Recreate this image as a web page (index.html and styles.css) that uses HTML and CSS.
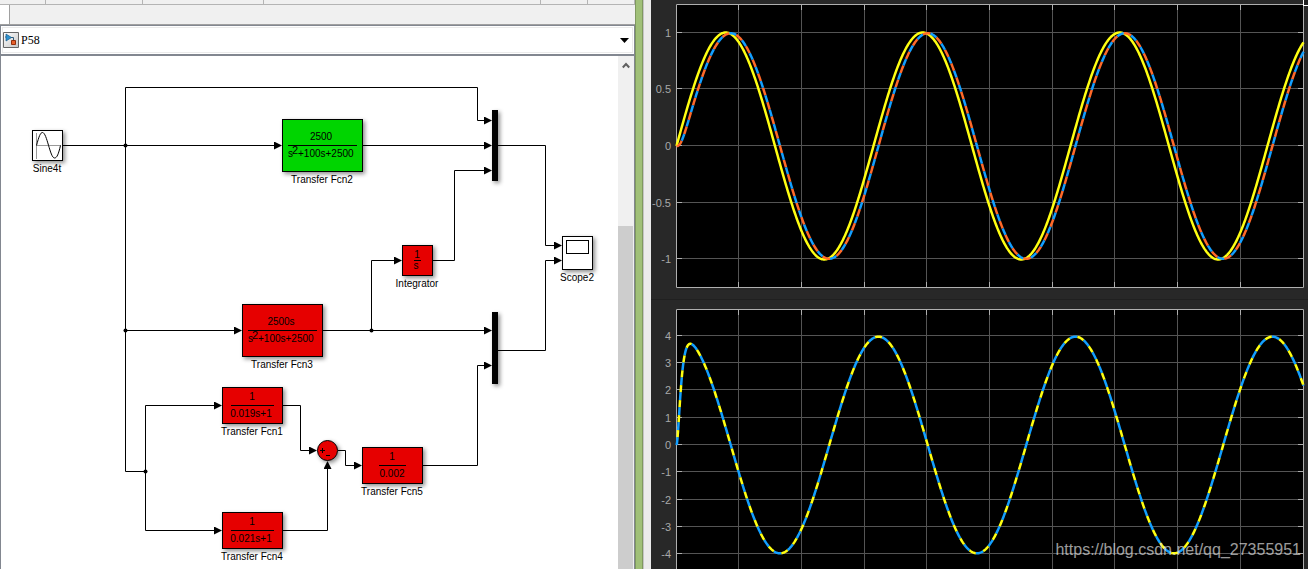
FILE: index.html
```
<!DOCTYPE html>
<html lang="en">
<head>
<meta charset="utf-8">
<title>P58</title>
<link rel="stylesheet" href="styles.css">
</head>
<body>
<main class="workspace">
  <section class="editor" aria-label="Model editor">
    <div class="toolbar"><span class="cell"></span><span class="cell"></span><span class="cell"></span><span class="cell"></span><span class="cell"></span><span class="cell"></span></div>
    <div class="tabs"><span class="tab"></span></div>
    <div class="path-bar">
      <div class="path-box">
        <svg class="model-icon" width="16" height="16" viewBox="0 0 16 16" aria-hidden="true">
          <defs><linearGradient id="tile" x1="0" y1="0" x2="1" y2="1"><stop offset="0" stop-color="#fff"/><stop offset="1" stop-color="#c6c6c6"/></linearGradient></defs>
          <path d="M.5 .5h15v15H.5z" fill="url(#tile)" stroke="#666"/>
          <path d="M2 5h2M8 5.500h2.500v3" fill="none" stroke="#335a78"/>
          <path d="M3 2l5.500 3.500-5.500 3.500z" fill="#2e93d0" stroke="#175d8c" stroke-width=".7"/>
          <path d="M8.500 8.500h4v4h-4z" fill="#e8602c" stroke="#922f0c"/>
        </svg>
        <select class="path-select" aria-label="Model path"><option>P58</option></select>
        <svg class="caret" width="9" height="5" viewBox="0 0 9 5" aria-hidden="true"><path d="M0 0h9L4.500 5z"/></svg>
      </div>
    </div>
    <div class="canvas-row">
      <div class="canvas">
        <svg class="diagram" width="617" height="513" viewBox="1 56 617 513" role="img" aria-label="Block diagram">
          <defs><marker id="arrow" viewBox="0 0 8 8" markerWidth="8" markerHeight="8" refX="7" refY="4" orient="auto" markerUnits="userSpaceOnUse"><path d="M0 0L8 4L0 8z"/></marker></defs>
          <g class="wires">
            <path class="to" d="M63 145.500H281"/>
            <path class="to" d="M125.500 145.500V87.500H477.500V120.500H491"/>
            <path class="to" d="M363 145.500H491"/>
            <path class="to" d="M433 260.500H454.500V170.500H491"/>
            <path class="to" d="M498 145.500H545.500V245.500H561"/>
            <path class="to" d="M498 350.500H545.500V260.500H561"/>
            <path class="to" d="M125.500 330.500H241"/>
            <path class="to" d="M323 330.500H491"/>
            <path class="to" d="M371.500 330.500V260.500H401"/>
            <path d="M125.500 145.500V471.500H145.500"/>
            <path class="to" d="M145.500 471.500V405.500H221"/>
            <path class="to" d="M145.500 471.500V530.500H221"/>
            <path class="to" d="M283 405.500H300.500V450.500H316"/>
            <path class="to" d="M283 530.500H327.500V462"/>
            <path class="to" d="M338 450.500H345.500V465.500H361"/>
            <path class="to" d="M423 465.500H477.500V365.500H491"/>
          </g>
          <g class="joints"><circle cx="125.500" cy="145.500" r="2"/><circle cx="125.500" cy="330.500" r="2"/><circle cx="145.500" cy="471.500" r="2"/><circle cx="371.500" cy="330.500" r="2"/></g>

          <g class="block"><rect class="plain" x="32.500" y="130.500" width="30" height="30"/></g>
          <path d="M36.500 133V159M36 145.500H61" stroke="#999" fill="none"/>
          <path d="M36.500 145.500C39 136 40.500 132.500 42.500 132.500C47 132.500 50 158 54.500 158C57 158 58.500 154 60.500 145.500" stroke="#000" fill="none"/>
          <text x="47" y="172">Sine4t</text>

          <g class="block"><rect class="green" x="282.500" y="119.500" width="80" height="52"/></g>
          <path class="bar" d="M288 145.500H357"/>
          <text x="321" y="140">2500</text>
          <text class="left" x="288" y="157">s</text><text class="left sup" x="292" y="154">2</text><text class="left" x="298" y="157">+100s+2500</text>
          <text x="322" y="183">Transfer Fcn2</text>

          <g class="block"><rect class="red" x="242.500" y="304.500" width="80" height="52"/></g>
          <path class="bar" d="M248 330.500H317"/>
          <text x="281" y="325">2500s</text>
          <text class="left" x="248" y="342">s</text><text class="left sup" x="252" y="339">2</text><text class="left" x="258" y="342">+100s+2500</text>
          <text x="282" y="368">Transfer Fcn3</text>

          <g class="block"><rect class="red" x="222.500" y="387.500" width="60" height="36"/></g>
          <path class="bar" d="M231 405.500H274"/>
          <text x="252" y="400">1</text><text x="251" y="417">0.019s+1</text>
          <text x="252" y="435">Transfer Fcn1</text>

          <g class="block"><rect class="red" x="222.500" y="512.500" width="60" height="36"/></g>
          <path class="bar" d="M231 530.500H274"/>
          <text x="252" y="525">1</text><text x="251" y="542">0.021s+1</text>
          <text x="252" y="560">Transfer Fcn4</text>

          <g class="block"><rect class="red" x="362.500" y="447.500" width="60" height="36"/></g>
          <path class="bar" d="M379 465.500H406"/>
          <text x="392" y="460">1</text><text x="392" y="477">0.002</text>
          <text x="392" y="495">Transfer Fcn5</text>

          <g class="block"><circle class="red" cx="327.500" cy="450.500" r="10"/></g>
          <path class="bar" d="M320 450.500H325M322.500 448V453M326 455.500H330"/>

          <g class="block"><rect class="red" x="402.500" y="245.500" width="30" height="30"/></g>
          <path class="bar" d="M414 260.500H421"/>
          <text x="417" y="258">1</text><text x="416" y="269">s</text>
          <text x="417" y="287">Integrator</text>

          <g class="block"><rect class="mux" x="492" y="110" width="6" height="71"/><rect class="mux" x="492" y="312" width="6" height="72"/></g>

          <g class="block"><rect class="plain" x="562.500" y="236.500" width="30" height="33"/></g>
          <rect class="screen" x="566.500" y="240.500" width="22" height="13"/>
          <text x="577" y="281">Scope2</text>
        </svg>
      </div>
      <div class="scrollbar">
        <button class="scroll-up" aria-label="Scroll up"><svg width="8" height="7" viewBox="0 0 8 7"><path d="M.8 5.500L4 2L7.200 5.500" fill="none" stroke="#606060" stroke-width="2"/></svg></button>
        <div class="thumb"></div>
      </div>
    </div>
  </section>
  <div class="frame-gap"></div>
  <section class="scope" aria-label="Scope">
    <figure class="panel"><svg class="plot" id="plot-position" role="img" aria-label="Tracked signals"></svg></figure>
    <figure class="panel panel-second"><svg class="plot" id="plot-rate" role="img" aria-label="Derivative signals"></svg></figure>
    <span class="corner"></span>
    <span class="watermark">https://blog.csdn.net/qq_27355951</span>
  </section>
</main>
<script src="plots.js"></script>
</body>
</html>
```
FILE: styles.css
```
* { box-sizing: border-box; }
body {
  margin: 0;
  overflow: hidden;
  background: #f0f0f0;
  font-family: "Liberation Sans", Arial, sans-serif;
}
.workspace {
  display: grid;
  grid-template-columns: minmax(0, 635fr) 16px minmax(0, 657fr);
  height: 100vh;
}
.editor {
  display: flex;
  flex-direction: column;
  min-height: 0;
}
.toolbar {
  display: grid;
  grid-template-columns: 46fr 97fr 121fr 277fr 47fr 47fr;
  height: 5px;
  border-bottom: 1px solid #b4b4b4;
}
.cell { border-right: 1px solid #b4b4b4; }
.tabs {
  display: flex;
  height: 20px;
  border-bottom: 1px solid #a0a0a0;
}
.tab {
  width: 10px;
  background: #fff;
  border-right: 1px solid #a0a0a0;
}
.path-bar {
  height: 31px;
  padding: 1px;
  background: #fff;
  border: 1px solid #828790;
  border-bottom-width: 2px;
}
.path-box {
  display: flex;
  align-items: center;
  height: 100%;
  padding: 0 3px 0 0;
  border: 1px solid #ebebeb;
}
.path-select {
  flex: 1;
  margin: 0;
  padding: 0 2px;
  border: 0;
  background: transparent;
  color: #000;
  appearance: none;
  font: 12px/16px "Liberation Serif", serif;
}
.canvas-row {
  display: flex;
  flex: 1;
  min-height: 0;
  border: 1px solid #828790;
  border-width: 0 1px;
  background: #fff;
}
.canvas {
  flex: 1;
  min-width: 0;
  overflow: hidden;
}
.diagram { display: block; }
.diagram text {
  font-size: 10px;
  text-anchor: middle;
}
.diagram .left { text-anchor: start; }
.diagram .sup { font-size: 11px; }
.wires path { fill: none; stroke: #000; }
.wires .to { marker-end: url(#arrow); }
.block {
  stroke: #000;
  filter: drop-shadow(2px 2px 2px rgba(0, 0, 0, 0.45));
}
.green { fill: #00d500; }
.red { fill: #e60000; }
.plain { fill: #fff; }
.mux { fill: #000; stroke: none; }
.screen { fill: #fff; stroke: #000; }
.bar { fill: none; stroke: #000; }
.scrollbar {
  display: flex;
  flex-direction: column;
  width: 16px;
  padding-right: 1px;
  background: #f0f0f0;
}
.scroll-up {
  height: 17px;
  margin-bottom: 153px;
  padding: 0;
  border: 0;
  background: transparent;
  line-height: 10px;
}
.thumb { flex: 1; background: #cdcdcd; }
.frame-gap {
  background: linear-gradient(to right, #7f985f 1px, #a0c078 1px 7px, #7f985f 7px 8px, #c4c4c4 8px 9px, #ebebeb 9px);
}
.scope {
  position: relative;
  overflow: hidden;
  background: #282828;
}
.panel {
  height: 300px;
  margin: 0;
  padding: 4px 4px 11px 25px;
  border-bottom: 1px solid #202020;
}
.panel-second { padding: 9px 4px 18px 25px; }
.plot {
  display: block;
  width: 100%;
  height: 100%;
  overflow: visible;
}
.plot text {
  font-size: 11px;
  text-anchor: end;
  fill: #a8a8a8;
}
.plot-area { fill: #000; }
.grid { fill: none; stroke: #545454; }
.ticks { fill: none; stroke: #afafaf; }
.curve { fill: none; stroke-width: 2.5px; }
.yellow { stroke: #ffff11; }
.blue { stroke: #139fff; }
.orange { stroke: #ff6929; }
.dash-first { stroke-dasharray: 8 7; }
.dash-second { stroke-dasharray: 7 8; stroke-dashoffset: -8px; }
.corner {
  position: absolute;
  top: -2px;
  right: -3px;
  width: 8px;
  height: 8px;
  border: 1px solid #fff;
  background: #202020;
}
.watermark {
  position: absolute;
  right: 7px;
  bottom: 9px;
  color: rgba(225, 225, 225, 0.7);
  font-size: 16px;
  line-height: 20px;
}
```
FILE: plots.js
```
const DURATION = 5;
const FREQ = 4;
const POLE = 50;
const GAIN = POLE * POLE / (POLE * POLE + FREQ * FREQ);
const LAG = 2 * Math.atan(FREQ / POLE);
const A = GAIN * Math.sin(LAG);
const B = POLE * A - FREQ * GAIN * Math.cos(LAG);

const source = t => Math.sin(FREQ * t);
const tracked = t => GAIN * Math.sin(FREQ * t - LAG) + (A + B * t) * Math.exp(-POLE * t);
const rate = t => FREQ * GAIN * Math.cos(FREQ * t - LAG) + (B - POLE * A - POLE * B * t) * Math.exp(-POLE * t);

function draw(id, limit, labels, curves) {
  const svg = document.getElementById(id);
  const box = svg.getBoundingClientRect();
  const w = Math.floor(box.width) - 1;
  const h = Math.floor(box.height) - 1;
  const px = v => Math.floor(v) + 0.5;
  const yOf = v => h / 2 - v / limit * h / 2;
  let grid = "";
  let ticks = `M.5 .5H${w + 0.5}V${h + 0.5}H.5Z`;
  for (let i = 1; i < 10; i++) {
    const x = px(i * w / 10);
    grid += `M${x} 0V${h}`;
    ticks += `M${x} 0v6M${x} ${h}v-5`;
  }
  let text = "";
  for (const v of labels) {
    const y = px(yOf(v));
    grid += `M0 ${y}H${w}`;
    ticks += `M0 ${y}h6M${w} ${y}h-5`;
    text += `<text x="-5" y="${y + 4.5}">${v}</text>`;
  }
  const lines = curves.map(([fn, cls]) => {
    let d = "";
    for (let i = 0; i <= 1250; i++) {
      const t = i * DURATION / 1250;
      d += `${i ? "L" : "M"}${(0.5 + t / DURATION * w).toFixed(2)} ${(0.5 + yOf(fn(t))).toFixed(2)}`;
    }
    return `<path class="curve ${cls}" d="${d}"/>`;
  }).join("");
  svg.innerHTML = `<rect class="plot-area" width="${w + 1}" height="${h + 1}"/><path class="grid" d="${grid}"/><path class="ticks" d="${ticks}"/>${lines}${text}`;
}

function render() {
  draw("plot-position", 1.247, [1, 0.5, 0, -0.5, -1], [
    [source, "yellow"], [tracked, "orange dash-first"], [tracked, "blue dash-second"]
  ]);
  draw("plot-rate", 4.972, [4, 3, 2, 1, 0, -1, -2, -3, -4], [
    [rate, "blue dash-first"], [rate, "yellow dash-second"]
  ]);
}
render();
window.addEventListener("resize", render);
```
